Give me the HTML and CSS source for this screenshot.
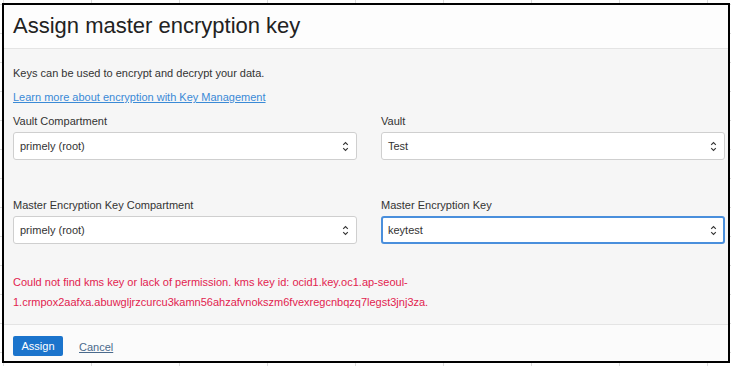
FILE: index.html
```html
<!DOCTYPE html>
<html lang="en">
<head>
  <meta charset="UTF-8" />
  <title>Assign master encryption key</title>
  <link rel="stylesheet" href="styles.css">
</head>
<body>
  <div class="dialog">
    <div class="dialog-header">
      <h1>Assign master encryption key</h1>
    </div>

    <div class="dialog-body">
      <p class="intro">Keys can be used to encrypt and decrypt your data.</p>
      <p class="learn"><a href="#">Learn more about encryption with Key Management</a></p>

      <div class="fields">
        <div class="field">
          <label>Vault Compartment</label>
          <div class="select">
            <span>primely (root)</span>
            <svg class="chevron" width="7" height="11" viewBox="0 0 7 11"><path d="M1.2 3.8 L3.5 1.5 L5.8 3.8 M1.2 7.2 L3.5 9.5 L5.8 7.2" fill="none" stroke="#333" stroke-width="1.1"/></svg>
          </div>
        </div>
        <div class="field">
          <label>Vault</label>
          <div class="select">
            <span>Test</span>
            <svg class="chevron" width="7" height="11" viewBox="0 0 7 11"><path d="M1.2 3.8 L3.5 1.5 L5.8 3.8 M1.2 7.2 L3.5 9.5 L5.8 7.2" fill="none" stroke="#333" stroke-width="1.1"/></svg>
          </div>
        </div>
        <div class="field">
          <label>Master Encryption Key Compartment</label>
          <div class="select">
            <span>primely (root)</span>
            <svg class="chevron" width="7" height="11" viewBox="0 0 7 11"><path d="M1.2 3.8 L3.5 1.5 L5.8 3.8 M1.2 7.2 L3.5 9.5 L5.8 7.2" fill="none" stroke="#333" stroke-width="1.1"/></svg>
          </div>
        </div>
        <div class="field">
          <label>Master Encryption Key</label>
          <div class="select focused">
            <span>keytest</span>
            <svg class="chevron" width="7" height="11" viewBox="0 0 7 11"><path d="M1.2 3.8 L3.5 1.5 L5.8 3.8 M1.2 7.2 L3.5 9.5 L5.8 7.2" fill="none" stroke="#333" stroke-width="1.1"/></svg>
          </div>
        </div>
      </div>

      <p class="error">Could not find kms key or lack of permission. kms key id: ocid1.key.oc1.ap-seoul-<br>1.crmpox2aafxa.abuwgljrzcurcu3kamn56ahzafvnokszm6fvexregcnbqzq7legst3jnj3za.</p>
    </div>

    <div class="dialog-footer">
      <button class="btn-primary">Assign</button>
      <a href="#" class="cancel">Cancel</a>
    </div>
  </div>
</body>
</html>
```

FILE: styles.css
```css
body {
  margin: 0;
  font-family: "Liberation Sans", Arial, sans-serif;
  color: #333;
  background-color: #fff;
  background-image:
    linear-gradient(to right, #dcdcdc 1px, transparent 1px),
    linear-gradient(to bottom, #dcdcdc 1px, transparent 1px);
  background-size: 88px 29px;
  background-position: 3px 4px;
  height: 366px;
  overflow: hidden;
}

.dialog {
  box-sizing: border-box;
  width: 728px;
  height: 360px;
  margin: 3px 0 0 2px;
  border: 2px solid #000;
  display: flex;
  flex-direction: column;
  background: #f6f6f6;
}

.dialog-header {
  height: 43px;
  background: #fdfdfd;
  border-bottom: 1px solid #e4e4e4;
  padding-left: 9px;
}

.dialog-header h1 {
  margin: 0;
  font-weight: normal;
  font-size: 22px;
  line-height: 34px;
  padding-top: 4px;
  color: #222;
}

.dialog-body {
  flex: 1;
  padding: 0 3px 0 9px;
  font-size: 11px;
  line-height: 16px;
}

.intro {
  margin: 16px 0 0;
}

.learn {
  margin: 8px 0 0;
}

.learn a {
  color: #3a8ad6;
}

.fields {
  margin-top: 8px;
  display: grid;
  grid-template-columns: 1fr 1fr;
  column-gap: 24px;
  row-gap: 37px;
}

.field label {
  display: block;
  margin-bottom: 3px;
  color: #333;
}

.select {
  box-sizing: border-box;
  height: 28px;
  background: #fff;
  border: 1px solid #cfcfcf;
  border-radius: 3px;
  display: flex;
  align-items: center;
  justify-content: space-between;
  padding: 0 7px 0 6px;
  color: #333;
}

.select.focused {
  border: 2px solid #4a8fdc;
  padding: 0 6px 0 5px;
}

.chevron {
  display: block;
}

.error {
  margin: 28px 0 0;
  line-height: 20px;
  color: #e2234f;
}

.dialog-footer {
  height: 36px;
  background: #fbfbfb;
  border-top: 1px solid #e4e4e4;
  padding-left: 9px;
  display: flex;
  align-items: flex-start;
  gap: 16px;
}

.btn-primary {
  margin-top: 11px;
  width: 50px;
  height: 20px;
  padding: 0;
  border: none;
  border-radius: 2px;
  background: #1b74cc;
  color: #fff;
  font-family: inherit;
  font-size: 11px;
}

.cancel {
  margin-top: 14px;
  font-size: 11px;
  line-height: 16px;
  color: #4a6a8c;
}
```
